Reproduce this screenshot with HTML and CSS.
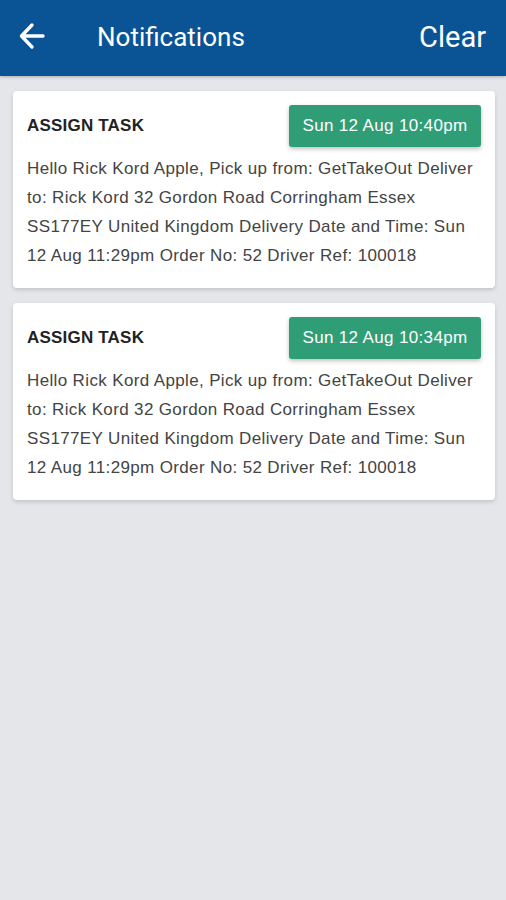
FILE: index.html
```html
<!DOCTYPE html>
<html>
<head>
<meta charset="utf-8">
<link rel="stylesheet" href="styles.css">
</head>
<body>
<header class="appbar">
  <button class="back" aria-label="Back">
    <svg width="26" height="28" viewBox="0 0 26 28"><path d="M13 3 L2.5 14 L13 25 M2.5 14 H24" fill="none" stroke="#fff" stroke-width="3.4" stroke-linecap="round" stroke-linejoin="round"/></svg>
  </button>
  <h1 class="title">Notifications</h1>
  <span class="clear">Clear</span>
</header>
<main class="list">
  <article class="card">
    <div class="card-head">
      <span class="card-title">ASSIGN TASK</span>
      <span class="badge">Sun 12 Aug 10:40pm</span>
    </div>
    <p class="card-body">Hello Rick Kord Apple, Pick up from: GetTakeOut Deliver to: Rick Kord 32 Gordon Road Corringham Essex SS177EY United Kingdom Delivery Date and Time: Sun 12 Aug 11:29pm Order No: 52 Driver Ref: 100018</p>
  </article>
  <article class="card">
    <div class="card-head">
      <span class="card-title">ASSIGN TASK</span>
      <span class="badge">Sun 12 Aug 10:34pm</span>
    </div>
    <p class="card-body">Hello Rick Kord Apple, Pick up from: GetTakeOut Deliver to: Rick Kord 32 Gordon Road Corringham Essex SS177EY United Kingdom Delivery Date and Time: Sun 12 Aug 11:29pm Order No: 52 Driver Ref: 100018</p>
  </article>
</main>
</body>
</html>
```
FILE: styles.css
```css
* { box-sizing: border-box; }
html, body { margin: 0; padding: 0; }
body {
  width: 506px;
  height: 900px;
  background: #e4e6e9;
  font-family: "Liberation Sans", Arial, sans-serif;
  overflow: hidden;
}
.appbar {
  height: 76px;
  background: #0a5496;
  display: flex;
  align-items: center;
  padding: 0 20px 0 19px;
  color: #fff;
  box-shadow: 0 1px 3px rgba(0,0,0,0.25);
  font-family: Roboto, "Liberation Sans", sans-serif;
}
.back {
  background: none;
  border: 0;
  padding: 0;
  width: 26px;
  height: 28px;
  display: flex;
  margin-top: -5px;
}
.title {
  margin: 0 0 0 52px;
  font-size: 26px;
  font-weight: 400;
  flex: 1;
  margin-top: -2px;
}
.clear {
  font-size: 29px;
  margin-top: -2px;
}
.list {
  display: flex;
  flex-direction: column;
  gap: 15px;
  padding: 15px 11px 0 13px;
}
.card {
  background: #fff;
  border-radius: 4px;
  box-shadow: 0 2px 4px rgba(0,0,0,0.15);
  padding: 14px 14px 18px 14px;
}
.card-head {
  display: flex;
  justify-content: space-between;
  align-items: center;
}
.card-title {
  font-size: 17px;
  font-weight: 700;
  color: #222;
  letter-spacing: 0.2px;
}
.badge {
  background: #2f9e77;
  color: #fff;
  font-size: 17px;
  letter-spacing: 0.35px;
  height: 42px;
  width: 192px;
  display: flex;
  align-items: center;
  justify-content: center;
  border-radius: 3px;
  box-shadow: 0 2px 4px rgba(0,0,0,0.25);
}
.card-body {
  margin: 7px 0 0 0;
  font-size: 17px;
  line-height: 29px;
  letter-spacing: 0.36px;
  color: #444;
}
```
